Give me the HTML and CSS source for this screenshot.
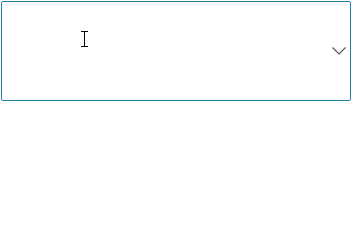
FILE: index.html
```html
<!DOCTYPE html>
<html>
<head>
<meta charset="utf-8">
<link rel="stylesheet" href="styles.css">
</head>
<body>
<div class="page">
  <div class="select">
    <span class="value"></span>
    <svg class="chevron" width="14" height="8" viewBox="0 0 14 8"><path d="M0.5 0.5 L7 7 L13.5 0.5" fill="none" stroke="#555" stroke-width="1.2"/></svg>
  </div>
  <svg class="ibeam" width="8" height="16" viewBox="0 0 8 16"><path d="M0 0.5 H7 M3.5 0.5 V15.5 M0 15.5 H7" fill="none" stroke="#000" stroke-width="1"/></svg>
</div>
</body>
</html>
```
FILE: styles.css
```css
html, body { margin: 0; padding: 0; background: #fff; }
.page { position: relative; padding: 1px; width: 350px; }
.select {
  box-sizing: border-box;
  width: 350px;
  height: 100px;
  border: 1px solid #1f80aa;
  border-radius: 2px;
  display: flex;
  align-items: center;
  justify-content: flex-end;
  padding-right: 4px;
  font-family: "Segoe UI", "Open Sans", sans-serif;
}
.value { flex: 1; }
.chevron { display: block; }
.ibeam { position: absolute; left: 81px; top: 31px; }
```
